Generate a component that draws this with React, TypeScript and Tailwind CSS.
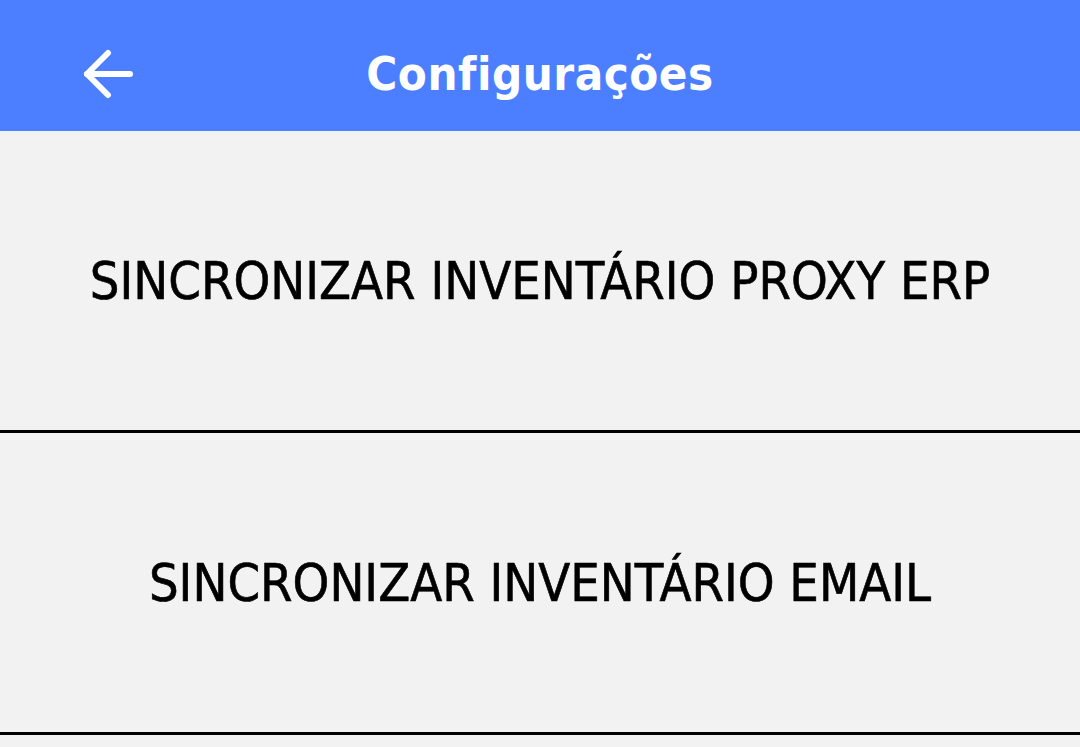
const rows = ["SINCRONIZAR INVENTÁRIO PROXY ERP", "SINCRONIZAR INVENTÁRIO EMAIL"];

export default function App() {
  return (
    <div className="min-h-[747px] w-[1080px] bg-[#f2f2f2] font-['DejaVu_Sans_Condensed',Roboto,sans-serif]">
      <header className="flex h-[131px] items-center bg-[#4b7fff] px-[82px] pt-[16px] text-white">
        <svg width="52" height="50" viewBox="0 0 52 50" fill="none" stroke="white" strokeWidth="6" strokeLinecap="round" strokeLinejoin="round">
          <path d="M48 25H5" />
          <path d="M26 4L5 25l21 21" />
        </svg>
        <h1 className="flex-1 pr-[52px] text-center text-[47px] font-bold leading-none tracking-[0.5px]">Configurações</h1>
      </header>
      {rows.map((r) => (
        <button key={r} className="flex h-[302px] w-full items-center justify-center border-b-[3px] border-black text-[52px] text-black [-webkit-text-stroke:0.6px_black]">
          {r}
        </button>
      ))}
    </div>
  );
}
